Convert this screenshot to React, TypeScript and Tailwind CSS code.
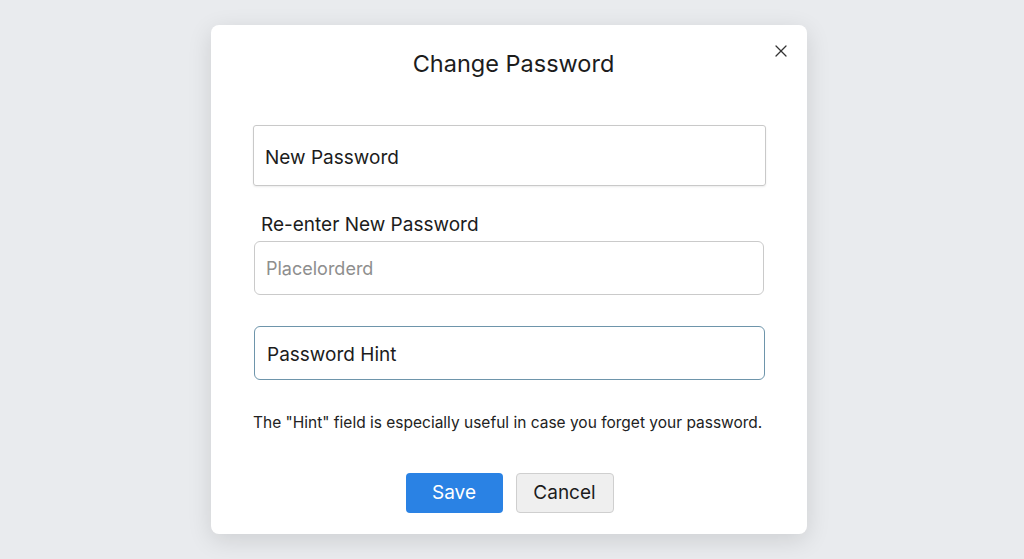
import { X } from 'lucide-react';

export default function App() {
  return (
    <div
      className="min-h-[559px] w-full bg-[#e9ebee] pt-[25px]"
      style={{ fontFamily: 'Inter, "Liberation Sans", sans-serif' }}
    >
      <div className="relative ml-[211px] flex h-[509px] w-[596px] flex-col rounded-[8px] bg-white px-[42px] pt-[23px] shadow-[0_6px_24px_rgba(0,0,0,0.12)]">
        <button className="absolute right-[16px] top-[16px] text-[#333]">
          <X size={20} strokeWidth={1.5} />
        </button>

        <h1 className="pl-[9px] text-center text-[23.5px] leading-[32px] text-[#1c1c1c]">Change Password</h1>

        <div className="mt-[45px] flex h-[61px] w-[513px] shrink-0 items-center rounded-[3px] border border-[#c9c9c9] px-[11px] pt-[5px] text-[19px] text-[#1c1c1c] shadow-[0_1px_2px_rgba(0,0,0,0.08)]">
          New Password
        </div>

        <label className="ml-[8px] mt-[26px] text-[19px] leading-[26px] text-[#1c1c1c]">Re-enter New Password</label>
        <div className="ml-[1px] mt-[3px] flex h-[54px] w-[510px] shrink-0 items-center rounded-[6px] border border-[#cacaca] px-[11px] text-[18px] text-[#8e8e8e]">
          Placelorderd
        </div>

        <div className="ml-[1px] mt-[31px] flex h-[54px] w-[511px] shrink-0 items-center rounded-[6px] border-[1.5px] border-[#6e95ab] px-[12px] pt-[5px] text-[19px] text-[#1c1c1c]">
          Password Hint
        </div>

        <p className="mt-[31px] whitespace-nowrap text-[15.5px] leading-[24px] text-[#222]">
          The "Hint" field is especially useful in case you forget your password.
        </p>

        <div className="mt-[38px] flex justify-center gap-[13px] pl-[1px]">
          <button className="h-[40px] w-[97px] rounded-[4px] bg-[#2a82e4] text-[19px] text-white">Save</button>
          <button className="h-[40px] w-[98px] rounded-[4px] border border-[#cfcfcf] bg-[#efefef] text-[19px] text-[#1c1c1c]">
            Cancel
          </button>
        </div>
      </div>
    </div>
  );
}
